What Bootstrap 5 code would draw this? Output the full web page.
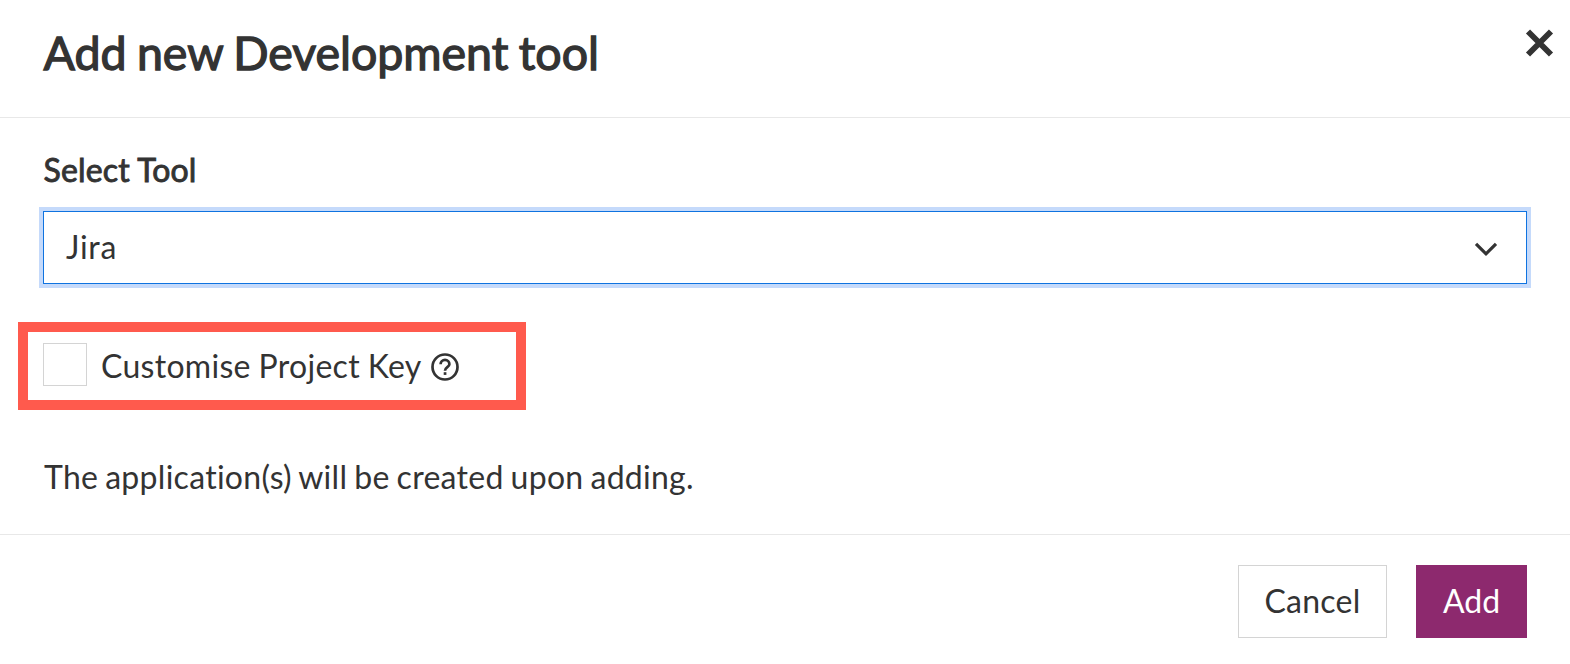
<!DOCTYPE html>
<html lang="en">
<head>
<meta charset="utf-8">
<meta name="viewport" content="width=device-width, initial-scale=1">
<title>Add new Development tool</title>
<link href="https://cdn.jsdelivr.net/npm/bootstrap@5.3.0/dist/css/bootstrap.min.css" rel="stylesheet">
<style>
body{font-family:Lato,sans-serif;color:#333;background:#fff;font-size:32px;line-height:48px;overflow:hidden;font-variant-ligatures:none}
.dialog{height:664px}
.dialog-head{height:118px;border-bottom:1px solid #e8e8e8;padding:20px 14px 0 43.5px}
.dialog-title{font-size:46.5px;line-height:64px;font-weight:400;letter-spacing:-.03px;word-spacing:-1.4px;-webkit-text-stroke:1.3px #333;margin:0}
.dialog-close{width:34px;height:34px;margin-top:6px;padding:0;border:0;background:none;display:block}
.dialog-close svg{display:block}
.dialog-body{padding:28px 43px 0;height:417px;border-bottom:1px solid #e8e8e8}
.tool-label{-webkit-text-stroke:.9px #333;display:block;letter-spacing:.15px;padding-left:.5px}
.tool-select{height:73px;margin-top:17px;border:1px solid #0f73e0;box-shadow:0 0 0 4px #c5dafb;padding:0 27px 0 22px}
.tool-value{letter-spacing:.7px;padding-bottom:1px}
.highlight{width:508px;height:88px;margin:38px 0 0 -25px;border:10px solid #ff5a4d;padding-left:15px}
.key-box{width:44px;height:43px;border:1px solid #d4d4d4;margin:0 14px 3px 0}
.key-text{letter-spacing:.3px;word-spacing:-.8px}
.key-help{margin-left:9px;margin-top:2px}
.note{margin:43px 0 0;padding-left:1px;letter-spacing:.28px;word-spacing:-1.5px}
.dialog-foot{padding:30px 43px 0;gap:29px}
.dialog-foot .btn{height:73px;border-radius:0;font-size:32px;line-height:48px;padding:0 0 2px}
.dialog-foot .btn-cancel{width:149px;border:1px solid #d4d4d4;color:#333;letter-spacing:.25px}
.dialog-foot .btn-add{width:111px;border:0;background:#8d296e;color:#fff}
</style>
</head>
<body>
<main class="dialog">
  <header class="dialog-head d-flex justify-content-between align-items-start">
    <h1 class="dialog-title">Add new Development tool</h1>
    <button class="dialog-close" type="button" aria-label="Close">
      <svg width="34" height="34" viewBox="0 0 34 34"><path d="M6 5.5 29 28.5M29 5.5 6 28.5" stroke="#333" stroke-width="5.8"/></svg>
    </button>
  </header>
  <section class="dialog-body">
    <span class="tool-label">Select Tool</span>
    <div class="tool-select d-flex align-items-center justify-content-between">
      <span class="tool-value">Jira</span>
      <svg width="26" height="26" viewBox="0 0 26 26" fill="none"><path d="m3 8.8 10 10 10-10" stroke="#333" stroke-width="3.2"/></svg>
    </div>
    <div class="highlight d-flex align-items-center">
      <span class="key-box"></span>
      <span class="key-text">Customise Project Key</span>
      <svg class="key-help" width="28" height="28" viewBox="0 0 28 28" fill="none"><circle cx="14" cy="14" r="12.5" stroke="#333" stroke-width="2.7"/><path d="M9.6 11.2a4.4 4.4 0 0 1 8.8 0c0 3-4.4 3-4.4 6.5" stroke="#333" stroke-width="2.7"/><path d="M12.7 19.2h2.7v2.7h-2.7z" fill="#333"/></svg>
    </div>
    <p class="note">The application(s) will be created upon adding.</p>
  </section>
  <footer class="dialog-foot d-flex justify-content-end">
    <button class="btn btn-cancel" type="button">Cancel</button>
    <button class="btn btn-add" type="button">Add</button>
  </footer>
</main>
<script src="https://cdn.jsdelivr.net/npm/bootstrap@5.3.0/dist/js/bootstrap.bundle.min.js"></script>
</body>
</html>
